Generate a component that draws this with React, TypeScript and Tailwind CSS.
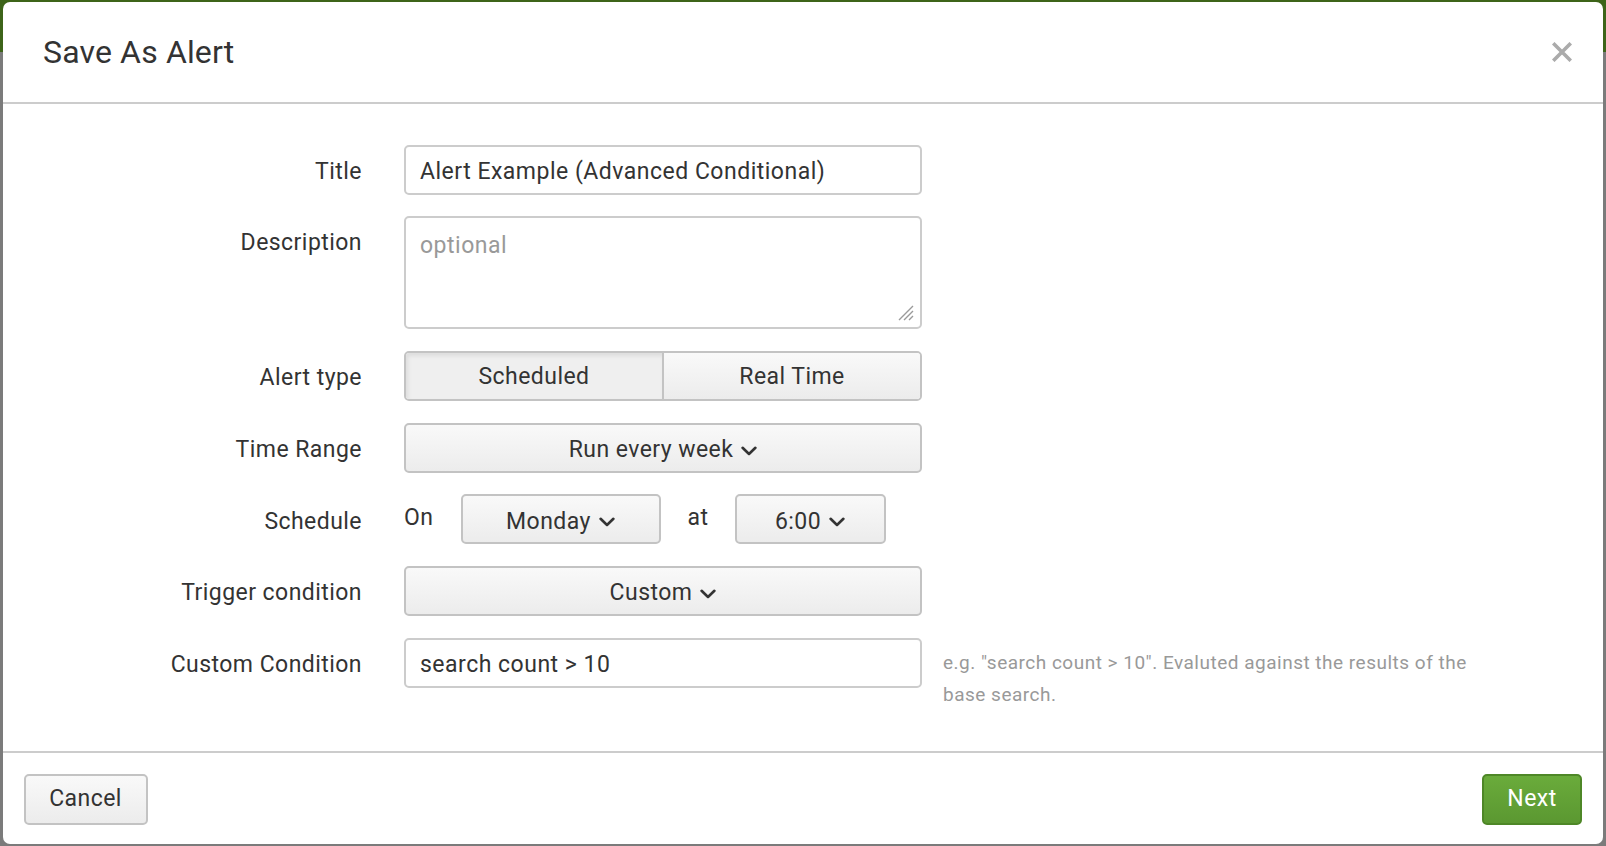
import React from "react";

const Chevron = () => (
  <svg width="16" height="10" viewBox="0 0 16 10" className="ml-[8px] mt-[1px]" fill="none">
    <path d="M1.6 1.8 L8 8 L14.4 1.8" stroke="#333" strokeWidth="2.6" strokeLinecap="round" strokeLinejoin="round" />
  </svg>
);

const btnBase =
  "flex items-center justify-center border-2 border-[#c3c3c3] rounded-[5px] bg-gradient-to-b from-[#f9f9f9] to-[#ececec] text-[23px] tracking-[0.45px] text-[#333]";
const btn = `${btnBase} h-[50px] pt-[5px]`;

function Label({ children }: { children: React.ReactNode }) {
  return (
    <div className="w-[359px] shrink-0 h-[50px] pt-[5px] flex items-center justify-end text-[23px] tracking-[0.45px] text-[#333]">
      {children}
    </div>
  );
}

export default function App() {
  return (
    <div
      className="relative w-[1606px] h-[846px] overflow-hidden bg-[#7b7b7b]"
      style={{ fontFamily: "Roboto, 'Liberation Sans', sans-serif" }}
    >
      <div className="h-[52px] bg-[#3d6419]" />
      <div className="absolute left-[3px] top-[2px] w-[1600px] h-[842px] bg-white rounded-[7px] flex flex-col">
        {/* header */}
        <div className="h-[101.5px] shrink-0 flex items-center justify-between pl-[40px] pr-[31px] border-b-2 border-[#cccccc]">
          <div className="text-[32px] tracking-[0.15px] text-[#333] leading-none">Save As Alert</div>
          <svg width="20" height="20" viewBox="0 0 20 20">
            <path d="M2.5 2.5 L17.5 17.5 M17.5 2.5 L2.5 17.5" stroke="#ababab" strokeWidth="3.6" strokeLinecap="square" />
          </svg>
        </div>
        {/* body */}
        <div className="flex-1 pt-[41px] flex flex-col gap-[21.7px]">
          {/* Title */}
          <div className="flex gap-[42px]">
            <Label>Title</Label>
            <div className="w-[518px] h-[50px] pt-[5px] border-2 border-[#cccccc] rounded-[5px] flex items-center pl-[14px] text-[23px] tracking-[0.5px] text-[#333]">
              Alert Example (Advanced Conditional)
            </div>
          </div>
          {/* Description */}
          <div className="flex gap-[42px]">
            <Label>Description</Label>
            <div className="relative w-[518px] h-[113px] border-2 border-[#cccccc] rounded-[5px] pl-[14px] pt-[11px] text-[23px] tracking-[0.5px] text-[#999]">
              optional
              <svg className="absolute right-[6px] bottom-[6px]" width="18" height="18" viewBox="0 0 18 18">
                <path d="M17 3 L3 17 M17 8 L8 17 M17 13 L13 17" stroke="#9a9a9a" strokeWidth="1.4" />
              </svg>
            </div>
          </div>
          {/* Alert type */}
          <div className="flex gap-[42px]">
            <Label>Alert type</Label>
            <div className="w-[518px] h-[50px] flex border-2 border-[#c3c3c3] rounded-[5px] overflow-hidden text-[23px] tracking-[0.45px] text-[#333]">
              <div className="flex-1 flex items-center justify-center pt-[3px] bg-[#efefef] shadow-[inset_2px_3px_4px_rgba(0,0,0,0.08)] border-r-2 border-[#c3c3c3]">
                Scheduled
              </div>
              <div className="flex-1 flex items-center justify-center pt-[3px] bg-gradient-to-b from-[#f9f9f9] to-[#ececec]">
                Real Time
              </div>
            </div>
          </div>
          {/* Time Range */}
          <div className="flex gap-[42px]">
            <Label>Time Range</Label>
            <div className={`${btn} w-[518px]`}>
              Run every week
              <Chevron />
            </div>
          </div>
          {/* Schedule */}
          <div className="flex gap-[42px]">
            <Label>Schedule</Label>
            <div className="flex items-center h-[50px] text-[23px] tracking-[0.45px] text-[#333]">
              <div className="w-[56.5px] -mt-[3px]">On</div>
              <div className={`${btn} w-[200px]`}>
                Monday
                <Chevron />
              </div>
              <div className="w-[74px] pl-[27px] -mt-[3px]">at</div>
              <div className={`${btn} w-[151px]`}>
                6:00
                <Chevron />
              </div>
            </div>
          </div>
          {/* Trigger condition */}
          <div className="flex gap-[42px]">
            <Label>Trigger condition</Label>
            <div className={`${btn} w-[518px]`}>
              Custom
              <Chevron />
            </div>
          </div>
          {/* Custom Condition */}
          <div className="flex">
            <Label>Custom Condition</Label>
            <div className="ml-[42px] w-[518px] h-[50px] pt-[5px] border-2 border-[#cccccc] rounded-[5px] flex items-center pl-[14px] text-[23px] tracking-[0.5px] text-[#333]">
              search count &gt; 10
            </div>
            <div className="ml-[21px] w-[548px] pt-[9px] text-[19px] tracking-[0.5px] leading-[32px] text-[#999]">
              e.g. "search count &gt; 10". Evaluted against the results of the base search.
            </div>
          </div>
        </div>
        {/* footer */}
        <div className="h-[93px] shrink-0 border-t-2 border-[#cccccc] flex items-center justify-between pl-[20.5px] pr-[21px] pt-[1px]">
          <div className={`${btnBase} w-[124px] h-[51px] pt-[1px]`}>Cancel</div>
          <div className="flex items-center justify-center w-[100px] h-[51px] pt-[1px] rounded-[5px] border-2 border-[#4e8727] bg-gradient-to-b from-[#6aab3b] to-[#5b9831] text-white text-[23px] tracking-[0.45px]">
            Next
          </div>
        </div>
      </div>
    </div>
  );
}
